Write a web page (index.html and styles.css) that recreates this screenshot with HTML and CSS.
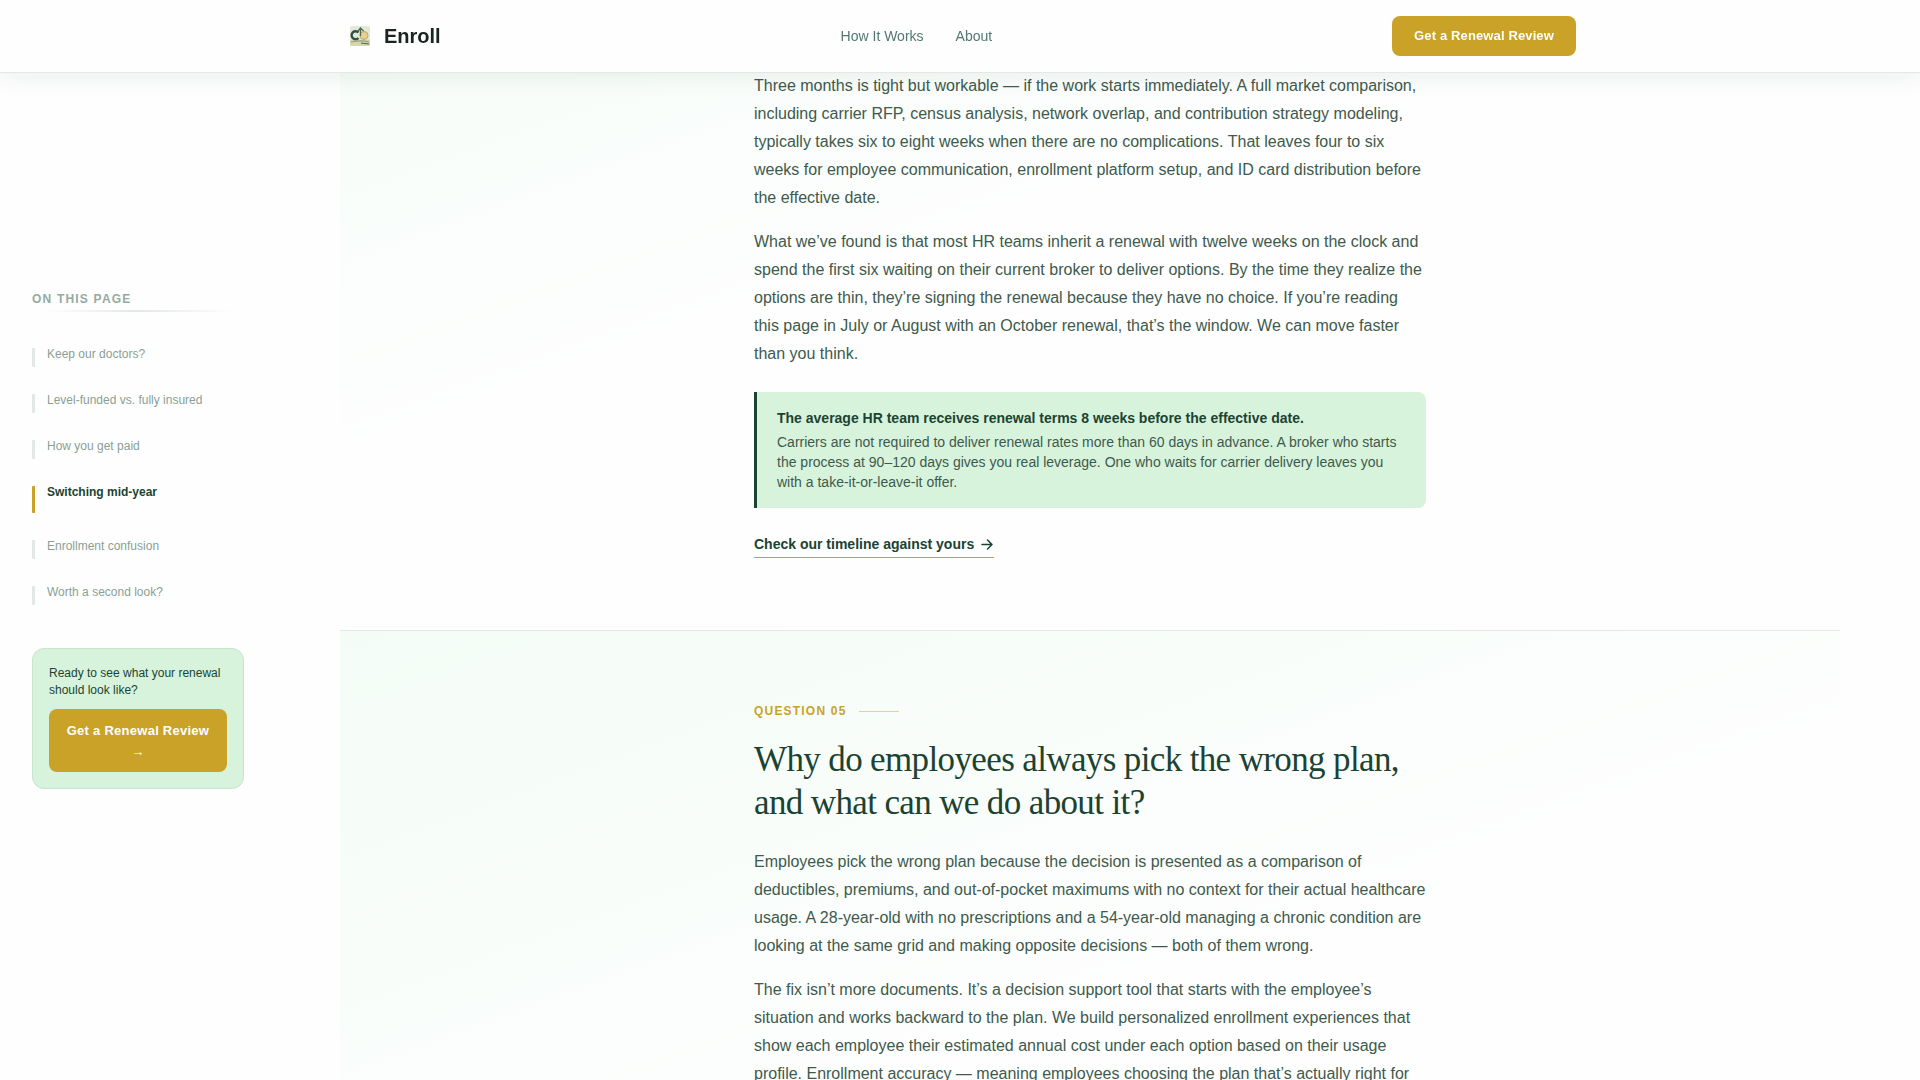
FILE: index.html
```html
<!DOCTYPE html>
<html lang="en">

<head>
    <meta charset="UTF-8">
    <meta name="viewport" content="width=device-width, initial-scale=1.0">
    <title>Enroll</title>
    <link rel="stylesheet" href="styles.css">
</head>

<body>
    <header class="site-header">
        <div class="header-inner">
            <a href="#" class="brand">
                <svg class="brand-logo" width="32" height="32" viewBox="0 0 32 32" aria-hidden="true">
                    <rect x="6" y="6" width="20" height="20" rx="2" fill="#e3e9d6"/>
                    <path d="M6 20h20v4a2 2 0 0 1-2 2H8a2 2 0 0 1-2-2z" fill="#d6d6ae"/>
                    <path d="M14.500 12.500a4 4 0 1 0 0 5.500" fill="none" stroke="#2f5146" stroke-width="2.400"/>
                    <circle cx="20" cy="15.500" r="4" fill="#e8cf94" stroke="#b9a76c" stroke-width="1"/>
                    <path d="M14 11l2.500-3 3 3M16.500 8v8" fill="none" stroke="#4c6b50" stroke-width="1.300"/>
                    <path d="M7 22c5-1 11-2 18 0" fill="none" stroke="#9aa36b" stroke-width="1.200"/>
                    <path d="M17 23l8 1" stroke="#4f6350" stroke-width="1.200"/>
                </svg>
                <span>Enroll</span>
            </a>
            <nav class="main-nav">
                <a href="#">How It Works</a>
                <a href="#">About</a>
            </nav>
            <button type="button" class="btn">Get a Renewal Review</button>
        </div>
    </header>

    <div class="layout">
        <aside class="sidebar">
            <p class="toc-title">On this page</p>
            <ul class="toc">
                <li><a href="#">Keep our doctors?</a></li>
                <li><a href="#">Level-funded vs. fully insured</a></li>
                <li><a href="#">How you get paid</a></li>
                <li><a href="#q4" class="active">Switching mid-year</a></li>
                <li><a href="#q5">Enrollment confusion</a></li>
                <li><a href="#">Worth a second look?</a></li>
            </ul>
            <div class="toc-card">
                <p>Ready to see what your renewal should look like?</p>
                <button type="button" class="btn btn-block">Get a Renewal Review →</button>
            </div>
        </aside>

        <main>
            <section class="question question-first" id="q4">
                <div class="content">
                    <p>Three months is tight but workable — if the work starts immediately. A full market comparison, including carrier RFP, census analysis, network overlap, and contribution strategy modeling, typically takes six to eight weeks when there are no complications. That leaves four to six weeks for employee communication, enrollment platform setup, and ID card distribution before the effective date.</p>
                    <p>What we’ve found is that most HR teams inherit a renewal with twelve weeks on the clock and spend the first six waiting on their current broker to deliver options. By the time they realize the options are thin, they’re signing the renewal because they have no choice. If you’re reading this page in July or August with an October renewal, that’s the window. We can move faster than you think.</p>
                    <div class="callout">
                        <strong>The average HR team receives renewal terms 8 weeks before the effective date.</strong>
                        Carriers are not required to deliver renewal rates more than 60 days in advance. A broker who starts the process at 90–120 days gives you real leverage. One who waits for carrier delivery leaves you with a take-it-or-leave-it offer.
                    </div>
                    <a href="#" class="text-link">Check our timeline against yours
                        <svg width="14" height="14" viewBox="0 0 14 14" fill="none" stroke="currentColor" stroke-width="1.500" stroke-linecap="round" stroke-linejoin="round" aria-hidden="true">
                            <path d="M2 7.500h10M7.500 3L12 7.500 7.500 12"/>
                        </svg>
                    </a>
                </div>
            </section>

            <section class="question" id="q5">
                <div class="content">
                    <div class="eyebrow">Question 05</div>
                    <h2>Why do employees always pick the wrong plan, and what can we do about it?</h2>
                    <p>Employees pick the wrong plan because the decision is presented as a comparison of deductibles, premiums, and out-of-pocket maximums with no context for their actual healthcare usage. A 28-year-old with no prescriptions and a 54-year-old managing a chronic condition are looking at the same grid and making opposite decisions — both of them wrong.</p>
                    <p>The fix isn’t more documents. It’s a decision support tool that starts with the employee’s situation and works backward to the plan. We build personalized enrollment experiences that show each employee their estimated annual cost under each option based on their usage profile. Enrollment accuracy — meaning employees choosing the plan that’s actually right for</p>
                </div>
            </section>
        </main>
    </div>
</body>

</html>
```

FILE: styles.css
```css
* {
    box-sizing: border-box;
    margin: 0;
    padding: 0;
}

body {
    font-family: "Liberation Sans", Arial, sans-serif;
    font-size: 16px;
    line-height: 28px;
    color: #3d5a4c;
    background-color: #fefefe;
}

a {
    text-decoration: none;
    color: inherit;
}

/* header */
.site-header {
    position: fixed;
    top: 0;
    left: 0;
    right: 0;
    z-index: 10;
    background-color: #fefefe;
    border-bottom: 1px solid #e4e9e7;
    box-shadow: 0 4px 24px rgba(27, 67, 50, 0.08);
}

.header-inner {
    display: flex;
    align-items: center;
    justify-content: space-between;
    max-width: 1232px;
    height: 72px;
    margin: 0 auto;
}

.brand {
    display: flex;
    align-items: center;
    gap: 8px;
    font-size: 20px;
    font-weight: bold;
    color: #1a2421;
}

.main-nav {
    display: flex;
    gap: 32px;
    font-size: 14px;
    color: #52796f;
}

.btn {
    height: 40px;
    padding: 0 22px;
    border: none;
    border-radius: 8px;
    background-color: #c9a227;
    color: #fefefe;
    font-family: inherit;
    font-size: 13px;
    font-weight: bold;
    line-height: 22px;
    letter-spacing: 0.01em;
    cursor: pointer;
}

.btn:hover {
    background-color: #b38f1f;
}

/* page */
.layout {
    display: grid;
    grid-template-columns: 340px 1fr;
    padding-right: 80px;
}

.sidebar {
    position: sticky;
    top: 0;
    display: flex;
    flex-direction: column;
    justify-content: center;
    height: 100vh;
    padding: 0 96px 1px 32px;
    font-size: 12px;
}

.toc-title {
    padding-bottom: 3px;
    border-bottom: 2px solid;
    border-image: linear-gradient(90deg, transparent 5%, #e2e8e5 50%, transparent 95%) 1;
    line-height: 16px;
    font-weight: bold;
    letter-spacing: 0.1em;
    text-transform: uppercase;
    color: #95aaa1;
}

.toc {
    display: flex;
    flex-direction: column;
    gap: 27px;
    margin: 36px 0 43px;
    list-style: none;
}

.toc a {
    display: block;
    padding: 0 0 6px 12px;
    border-left: 3px solid #e2e8e5;
    border-radius: 1px;
    line-height: 13px;
    color: #8a9e96;
}

.toc .active {
    padding-bottom: 14px;
    border-color: #c9a227;
    font-weight: bold;
    color: #1b4332;
}

.toc-card {
    padding: 16px;
    border: 1px solid #c5e5ce;
    border-radius: 12px;
    background-color: #d8f3dc;
}

.toc-card p {
    margin-bottom: 10px;
    line-height: 17px;
    color: #1b4332;
}

.btn-block {
    width: 100%;
    height: auto;
    padding: 11px 16px 10px;
    line-height: 21px;
    letter-spacing: 0.02em;
}

/* questions */
.question {
    padding: 72px 24px;
    border-top: 1px solid #e4e8e6;
    background-image: linear-gradient(160deg, #f3fcf6, #fefefe 660px);
}

.question-first {
    border-top: none;
    background-image: linear-gradient(160deg, #f3fcf6 -170px, #fefefe 490px);
}

.content {
    max-width: 672px;
    margin: 0 auto;
}

.content p {
    margin-bottom: 16px;
}

.callout {
    margin: 24px 0;
    padding: 16px 20px;
    border-left: 3px solid #1b4332;
    border-radius: 0 8px 8px 0;
    background-color: #d8f3dc;
    font-size: 14px;
    line-height: 20px;
}

.callout strong {
    display: block;
    margin-bottom: 4px;
    color: #1b4332;
}

.text-link {
    display: flex;
    align-items: center;
    gap: 6px;
    width: fit-content;
    padding-bottom: 1px;
    border-bottom: 1px solid #c9a227;
    font-size: 14px;
    font-weight: bold;
    line-height: 24px;
    color: #1b4332;
}

.eyebrow {
    display: flex;
    align-items: center;
    gap: 12px;
    margin-bottom: 19px;
    font-size: 12px;
    font-weight: bold;
    line-height: 16px;
    letter-spacing: 0.1em;
    text-transform: uppercase;
    color: #c9a227;
}

.eyebrow::after {
    content: "";
    width: 40px;
    height: 1px;
    background-color: #e4d193;
}

h2 {
    margin-bottom: 24px;
    font-family: "Liberation Serif", "Times New Roman", serif;
    font-size: 35px;
    font-weight: normal;
    line-height: 43px;
    letter-spacing: -0.018em;
    color: #1b4332;
}
```
